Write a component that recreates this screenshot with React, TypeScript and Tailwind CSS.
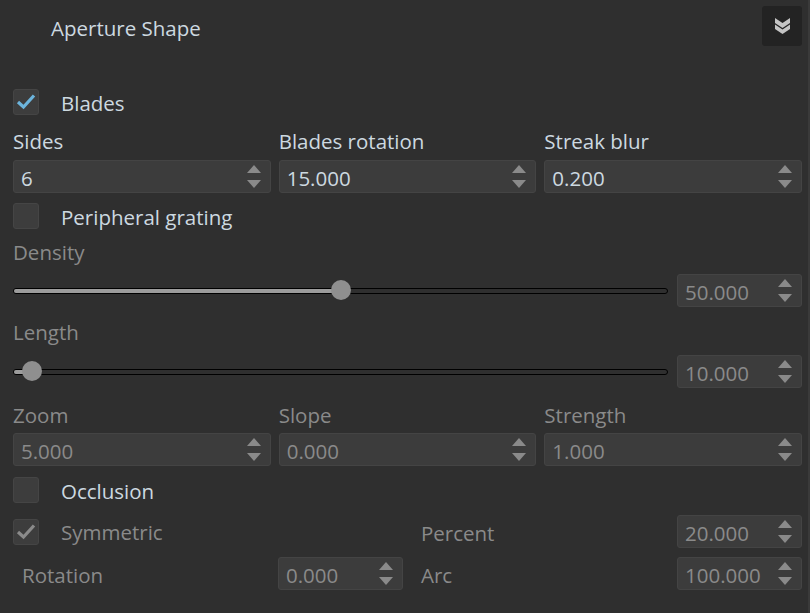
import React from "react";

const enabledText = "text-[#cdd9e0]";
const disabledText = "text-[#8a8a8a]";

const Spinner = () => (
  <svg width="14" height="24" viewBox="0 0 14 24" className="shrink-0">
    <path d="M7 0 L14 8 L0 8 Z" fill="#8a8a8a" />
    <path d="M0 15 L14 15 L7 23 Z" fill="#8a8a8a" />
  </svg>
);

const NumberBox = ({ value, disabled = false, className = "" }: { value: string; disabled?: boolean; className?: string }) => (
  <div
    className={`h-[33px] flex items-center justify-between pl-[7px] pr-[9px] rounded-[3px] bg-[#3c3c3c] border border-[#444444] ${className}`}
  >
    <span className={`leading-none translate-y-[2px] ${disabled ? disabledText : enabledText}`}>{value}</span>
    <Spinner />
  </div>
);

const Checkbox = ({ checked, disabled = false, label }: { checked: boolean; disabled?: boolean; label: string }) => (
  <div className="flex items-center h-[26px]">
    <div className="w-[26px] h-[26px] rounded-[3px] bg-[#3d3d3d] border border-[#454545] flex items-center justify-center">
      {checked && (
        <svg width="22" height="22" viewBox="0 0 22 22">
          <path
            d="M3 11 L8.5 16 L19 4.5"
            fill="none"
            stroke={disabled ? "#8a8a8a" : "#6cb4dc"}
            strokeWidth="3.2"
            strokeLinejoin="miter"
          />
        </svg>
      )}
    </div>
    <span className={`ml-[22px] translate-y-[1px] ${disabled ? disabledText : enabledText}`}>{label}</span>
  </div>
);

const Slider = ({ fraction }: { fraction: number }) => {
  const thumbLeft = 10 + fraction * 635;
  return (
    <div className="relative flex-1 h-[33px] flex items-center">
      <div className="relative w-full h-[6px] rounded-full border border-black bg-[#2f2f2f] overflow-hidden">
        <div className="h-full bg-[#9c9c9c]" style={{ width: `${thumbLeft}px` }} />
      </div>
      <div
        className="absolute top-[6px] w-[20px] h-[20px] rounded-full bg-[#8f8f8f]"
        style={{ left: `${thumbLeft - 10}px` }}
      />
    </div>
  );
};

const Label = ({ text, disabled = false, className = "" }: { text: string; disabled?: boolean; className?: string }) => (
  <div className={`h-[26px] leading-[26px] ${disabled ? disabledText : enabledText} ${className}`}>{text}</div>
);

export default function App() {
  return (
    <div
      className="w-[810px] h-[613px] bg-[#2f2f2f] border-r-2 border-[#3a3a3a] pl-[13px] pr-[6px] text-[20.5px] overflow-hidden"
      style={{ fontFamily: '"Open Sans", "Noto Sans", sans-serif' }}
    >
      {/* header */}
      <div className="flex items-start justify-between pt-[6px]">
        <div className={`ml-[38px] leading-[44px] ${enabledText}`}>Aperture Shape</div>
        <button className="w-[40px] h-[40px] rounded-[3px] bg-[#232323] flex items-center justify-center">
          <svg width="15" height="16" viewBox="0 0 15 16">
            <path d="M0 0 L7.5 5 L15 0 L15 5 L7.5 10 L0 5 Z" fill="#c4c4c4" />
            <path d="M0 6.5 L7.5 11.5 L15 6.5 L15 11 L7.5 16 L0 11 Z" fill="#c4c4c4" />
          </svg>
        </button>
      </div>

      <div className="mt-[39px]">
        <Checkbox checked label="Blades" />
      </div>

      <div className="grid grid-cols-3 gap-x-[8px] mt-[13px]">
        <Label text="Sides" />
        <Label text="Blades rotation" />
        <Label text="Streak blur" />
        <NumberBox value="6" className="mt-[6px]" />
        <NumberBox value="15.000" className="mt-[6px]" />
        <NumberBox value="0.200" className="mt-[6px]" />
      </div>

      <div className="mt-[10px]">
        <Checkbox checked={false} label="Peripheral grating" />
      </div>

      <Label text="Density" disabled className="mt-[10px]" />
      <div className="flex gap-[9px] mt-[9px]">
        <Slider fraction={0.5} />
        <NumberBox value="50.000" disabled className="w-[125px]" />
      </div>

      <Label text="Length" disabled className="mt-[12px]" />
      <div className="flex gap-[9px] mt-[10px]">
        <Slider fraction={0.0142} />
        <NumberBox value="10.000" disabled className="w-[125px]" />
      </div>

      <div className="grid grid-cols-3 gap-x-[8px] mt-[14px]">
        <Label text="Zoom" disabled />
        <Label text="Slope" disabled />
        <Label text="Strength" disabled />
        <NumberBox value="5.000" disabled className="mt-[5px]" />
        <NumberBox value="0.000" disabled className="mt-[5px]" />
        <NumberBox value="1.000" disabled className="mt-[5px]" />
      </div>

      <div className="mt-[11px]">
        <Checkbox checked={false} label="Occlusion" />
      </div>

      <div className="grid grid-cols-[390px_1fr] gap-x-[18px] gap-y-[9px] mt-[12px]">
        <div className="h-[33px] flex items-center">
          <Checkbox checked disabled label="Symmetric" />
        </div>
        <div className="flex items-center justify-between">
          <span className={`translate-y-[2px] ${disabledText}`}>Percent</span>
          <NumberBox value="20.000" disabled className="w-[125px]" />
        </div>
        <div className="flex items-center justify-between">
          <span className={`pl-[9px] translate-y-[2px] ${disabledText}`}>Rotation</span>
          <NumberBox value="0.000" disabled className="w-[125px]" />
        </div>
        <div className="flex items-center justify-between">
          <span className={`translate-y-[2px] ${disabledText}`}>Arc</span>
          <NumberBox value="100.000" disabled className="w-[125px]" />
        </div>
      </div>
    </div>
  );
}
